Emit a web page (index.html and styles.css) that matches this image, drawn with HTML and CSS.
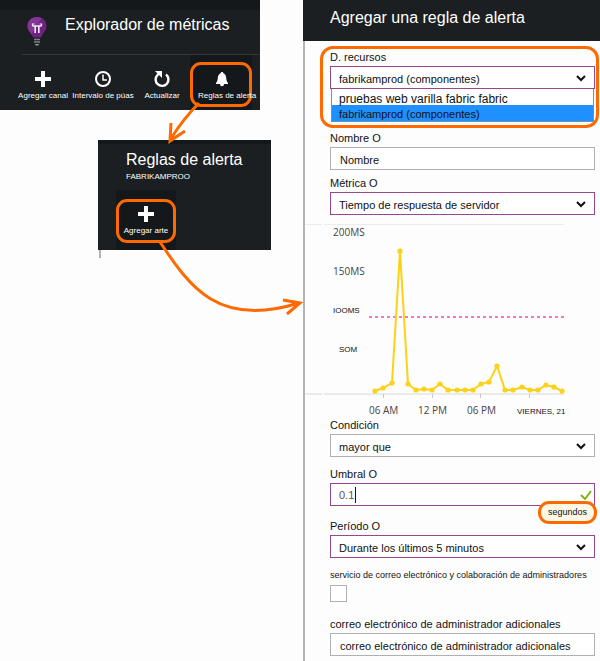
FILE: index.html
```html
<!DOCTYPE html>
<html lang="es">
<head>
<meta charset="utf-8">
<title>Agregar una regla de alerta</title>
<link rel="stylesheet" href="styles.css">
</head>
<body>
<div class="page">
  <main class="steps">
    <section class="explorer">
      <header class="explorer-head">
        <svg class="bulb" width="22" height="32" viewBox="0 0 22 32" aria-hidden="true">
          <path d="M11 2C5 2 1.500 6 1.500 11c0 4 2.500 6 4 8.500.8 1.500 1 2 1.500 3h8c.5-1 .7-1.500 1.500-3 1.500-2.500 4-4.500 4-8.500C20.500 6 17 2 11 2z" fill="#6d2380"/>
          <path d="M11 2C5 2 1.500 6 1.500 11c0 4 2.500 6 4 8.500L15.500 3C14.200 2.300 12.700 2 11 2z" fill="#8b3f9e" opacity=".7"/>
          <path d="M9.200 18v-7M12.800 18v-7M6.500 11h9" fill="none" stroke="#f4eaf7" stroke-width="1.600"/>
          <path d="M6.500 11V9h2M15.500 11V9h-2" fill="none" stroke="#f4eaf7" stroke-width="1.200"/>
          <path d="M8 24.500h6M8 27h6" stroke="#7d8285" stroke-width="1.500"/>
          <path d="M8.500 29h5l-1.500 1.500h-2z" fill="#92979a"/>
        </svg>
        <h1>Explorador de métricas</h1>
      </header>
      <nav class="toolbar">
        <button type="button" class="tool">
          <svg width="18" height="18" viewBox="0 0 18 18" aria-hidden="true"><path d="M9 1v16M1 9h16" stroke="#fff" stroke-width="4"/></svg>
          <span>Agregar canal</span>
        </button>
        <button type="button" class="tool">
          <svg width="18" height="18" viewBox="0 0 18 18" aria-hidden="true"><circle cx="9" cy="9" r="7" fill="none" stroke="#fff" stroke-width="2"/><path d="M9 4.500V10h4" fill="none" stroke="#fff" stroke-width="1.500"/></svg>
          <span>Intervalo de púas</span>
        </button>
        <button type="button" class="tool">
          <svg width="18" height="18" viewBox="0 0 18 18" aria-hidden="true"><path d="M13 4.500a6.400 6.400 0 1 1-8.500.5L6 3.500" fill="none" stroke="#fff" stroke-width="2.400"/><path d="M2 1h7v7L6.500 5.500 4.500 3.500z" fill="#fff"/></svg>
          <span>Actualizar</span>
        </button>
        <button type="button" class="tool tool-alerts">
          <svg width="18" height="18" viewBox="0 0 18 18" aria-hidden="true"><path d="M9 2c.8 0 1.300.5 1.300 1.200C12.500 4 13 6 13.200 8c.2 2.500.7 3.500 1.800 5v1H3v-1c1.100-1.500 1.600-2.500 1.800-5C5 6 5.500 4 7.700 3.200 7.700 2.500 8.200 2 9 2zM7 14h4c0 3-4 3-4 0z" fill="#fff"/></svg>
          <span>Reglas de alerta</span>
        </button>
      </nav>
    </section>

    <section class="rules">
      <h2>Reglas de alerta</h2>
      <p>FABRIKAMPROO</p>
      <button type="button" class="tool tool-add">
        <svg width="18" height="18" viewBox="0 0 18 18" aria-hidden="true"><path d="M9 1v16M1 9h16" stroke="#fff" stroke-width="4"/></svg>
        <span>Agregar arte</span>
      </button>
    </section>
    <div class="rules-edge"></div>

    <svg class="arrows" width="304" height="330" viewBox="0 0 304 330" aria-hidden="true">
      <g fill="none" stroke="#ff6a00" stroke-width="3">
        <path d="M199 103Q183 119 170 140M171 123l-1 18 15-10"/>
        <path d="M160 242C190 287 218 328 299 303M283 300l17 3-13 11"/>
      </g>
    </svg>
  </main>

  <aside class="blade">
    <header class="blade-head"><h2>Agregar una regla de alerta</h2></header>
    <form class="form">
      <div class="field field-resource">
        <label for="resource">D. recursos</label>
        <div class="select-box active">
          <select id="resource"><option>fabrikamprod (componentes)</option></select>
          <svg class="chevron" width="10" height="8" viewBox="0 0 10 8" aria-hidden="true"><path d="M1 2l4 4 4-4"/></svg>
        </div>
        <ul class="options">
          <li>pruebas web varilla fabric fabric</li>
          <li class="selected">fabrikamprod (componentes)</li>
        </ul>
      </div>

      <div class="field">
        <label for="name">Nombre O</label>
        <input class="text" id="name" type="text" value="Nombre">
      </div>

      <div class="field field-metric">
        <label for="metric">Métrica O</label>
        <div class="select-box active">
          <select id="metric"><option>Tiempo de respuesta de servidor</option></select>
          <svg class="chevron" width="10" height="8" viewBox="0 0 10 8" aria-hidden="true"><path d="M1 2l4 4 4-4"/></svg>
        </div>
      </div>

      <svg class="chart" viewBox="305 215 295 201" width="295" height="201" role="img" aria-label="Tiempo de respuesta de servidor">
        <defs>
          <marker id="dot" markerUnits="userSpaceOnUse" markerWidth="6" markerHeight="6" refX="3" refY="3"><circle cx="3" cy="3" r="2.600" fill="#fcd116"/></marker>
        </defs>
        <path d="M305 224.500h17M324 224.500h240" stroke="#ececec"/>
        <path d="M305 394h17M324 394h240" stroke="#e8eaec" stroke-width="2"/>
        <path d="M383.500 394v4M432.500 394v4M480.500 394v4M529.500 394v4" stroke="#c8c8c8"/>
        <path d="M369 317h195" stroke="#f277bd" stroke-width="2" stroke-dasharray="3 3"/>
        <polyline class="series" points="375,391 383,388 392,383 400,251 408,384 416,390 424,389 432,390 440,384 448,390 457,390 465,390 473,390 481,384 489,382 497,366 505,390 513,390 522,387 530,390 538,390 546,385 554,387 562,391"/>
        <g class="axis">
          <text x="333" y="236">200MS</text>
          <text x="333" y="275">150MS</text>
          <text class="alt" x="333" y="313">IOOMS</text>
          <text class="alt" x="339" y="352">SOM</text>
          <text x="369" y="414">06 AM</text>
          <text x="418" y="414">12 PM</text>
          <text x="467" y="414">06 PM</text>
          <text class="alt" x="517" y="414">VIERNES, 21</text>
        </g>
      </svg>

      <div class="field field-condition">
        <label for="condition">Condición</label>
        <div class="select-box">
          <select id="condition"><option>mayor que</option></select>
          <svg class="chevron" width="10" height="8" viewBox="0 0 10 8" aria-hidden="true"><path d="M1 2l4 4 4-4"/></svg>
        </div>
      </div>

      <div class="field field-threshold">
        <label for="threshold">Umbral O</label>
        <div class="input-box active">
          <input id="threshold" type="text" value="0.1" size="1">
          <i class="caret"></i>
          <svg class="check" width="12" height="10" viewBox="0 0 12 10" aria-hidden="true"><path d="M1 5l4 4 6-8" fill="none" stroke="#7cb518" stroke-width="2"/></svg>
        </div>
        <span class="unit">segundos</span>
      </div>

      <div class="field field-period">
        <label for="period">Período O</label>
        <div class="select-box active">
          <select id="period"><option>Durante los últimos 5 minutos</option></select>
          <svg class="chevron" width="10" height="8" viewBox="0 0 10 8" aria-hidden="true"><path d="M1 2l4 4 4-4"/></svg>
        </div>
      </div>

      <div class="field field-admins">
        <label class="small" for="admins">servicio de correo electrónico y colaboración de administradores</label>
        <input class="tick" id="admins" type="checkbox">
      </div>

      <div class="field field-emails">
        <label for="emails">correo electrónico de administrador adicionales</label>
        <input class="text" id="emails" type="text" value="correo electrónico de administrador adicionales">
      </div>
    </form>
  </aside>
</div>
</body>
</html>
```
FILE: styles.css
```css
* { box-sizing: border-box; }

body {
  margin: 0;
  background: #fdfdfd;
  color: #111;
  font-family: "Liberation Sans", Arial, sans-serif;
  font-size: 11px;
}

h1, h2, p, ul { margin: 0; padding: 0; }
h1, h2 { font-size: 16px; font-weight: 400; line-height: 20px; }

.page {
  display: grid;
  grid-template-columns: 303px minmax(0, 1fr);
}

.steps { position: relative; }

.arrows {
  position: absolute;
  top: 0;
  left: 0;
  pointer-events: none;
}

/* Dark panels */
.explorer, .rules {
  background: #1b1f21;
  color: #fff;
}

.explorer {
  width: 260px;
  border-top: 10px solid #14181a;
}

.explorer-head {
  display: flex;
  gap: 17px;
  margin-left: 22px;
  padding: 5px 0 7px 4px;
  border-bottom: 1px solid #34383a;
}

.toolbar {
  display: grid;
  grid-template-columns: 58px 62px 56px 62px;
  padding-left: 14px;
}

.tool {
  position: relative;
  display: flex;
  flex-direction: column;
  align-items: center;
  gap: 2px;
  height: 55px;
  padding: 15px 0 0;
  border: 0;
  background: none;
  color: #fff;
  font: 8px/12px "Liberation Sans", Arial, sans-serif;
  white-space: nowrap;
}

.tool span {
  position: relative;
  z-index: 1;
}

.tool-alerts, .tool-add { background: #14181a; }

.tool-alerts {
  align-items: flex-start;
  padding-left: 8px;
}

.tool-alerts svg { margin-left: 15px; }

.tool-alerts::after, .tool-add::after {
  content: "";
  position: absolute;
  inset: 7px 0 3px 0;
  border: 3px solid #ff6a00;
  border-radius: 11px;
}

.rules {
  width: 173px;
  margin: 30px 0 0 98px;
  padding: 8px 0 0 18px;
  border-top: 4px solid #14181a;
}

.rules h2, .rules p { padding-left: 10px; line-height: 12px; }
.rules h2 { line-height: 16px; }
.rules p { margin: 3px 0 7px; font-size: 8px; }

.tool-add {
  width: 60px;
  height: 60px;
}

.tool-add::after { inset: 9px 0 7px 0; }

.rules-edge {
  width: 2px;
  height: 8px;
  margin-left: 99px;
  background: #b4b4b4;
}

/* Rule form */
.blade-head {
  padding: 8px 27px 13px;
  background: #1b1f21;
  color: #fff;
}

.form {
  padding: 7px 5px 5px 25px;
  border-left: 2px solid #b4b4b4;
}

.field {
  position: relative;
  display: flex;
  flex-direction: column;
}

.field label { line-height: 18px; }
.field .small { font-size: 9px; }

.field-resource { margin-bottom: 7px; }

.field-resource::after {
  content: "";
  position: absolute;
  inset: -2px -4px -6px -10px;
  border: 3px solid #ff6a00;
  border-radius: 13px;
  pointer-events: none;
}

.field-metric { margin-top: 4px; }
.field-threshold, .field-admins { margin-top: 8px; }
.field-period { margin-top: 11px; }
.field-emails { margin-top: 13px; }

.select-box, .input-box, .text {
  height: 23px;
  border: 1px solid #b0b0b0;
  background: #fff;
}

.select-box, .input-box {
  display: flex;
  align-items: center;
  padding: 0 8px;
}

.select-box.active, .input-box.active { border-color: #93488f; }

.text, select, .input-box input {
  color: #111;
  font: 11px "Liberation Sans", Arial, sans-serif;
  outline: 0;
}

.text { padding: 2px 9px 0; }

select {
  flex: 1;
  min-width: 0;
  padding: 2px 0 0;
  border: 0;
  background: none;
  appearance: none;
}

.chevron { fill: none; stroke: #111; stroke-width: 2; }

.input-box { padding: 0 2px 0 8px; }

.input-box input {
  width: 16px;
  padding: 0;
  border: 0;
  background: none;
  color: #555;
}

.caret { width: 1px; height: 16px; background: #111; }
.check { margin-left: auto; }

.options {
  margin: 0 1px;
  border: 1px solid #6f93b5;
  border-top: 0;
  background: #fff;
  list-style: none;
}

.options li { padding: 2px 0 0 7px; line-height: 14px; }
.options li:first-child { padding-top: 4px; font-size: 12px; line-height: 12px; }
.options .selected { background: #1e90ff; }

.unit {
  position: absolute;
  top: 36px;
  right: -2px;
  padding: 3px 7px;
  border: 3px solid #ff6a00;
  border-radius: 11px;
  background: #fdf8e6;
  font-size: 9px;
  line-height: 11px;
}

.tick {
  width: 17px;
  height: 17px;
  margin: 1px 0 0;
  border: 1px solid #b0b0b0;
  background: #fff;
  appearance: none;
}

.chart {
  display: block;
  margin-left: -25px;
}

.series {
  fill: none;
  stroke: #fcd116;
  stroke-width: 2;
  marker: url(#dot);
}

.axis text {
  fill: #444;
  font: 10px "Open Sans", "Noto Sans", sans-serif;
}

.axis .alt {
  fill: #111;
  font: 8px "Liberation Sans", Arial, sans-serif;
}
```
